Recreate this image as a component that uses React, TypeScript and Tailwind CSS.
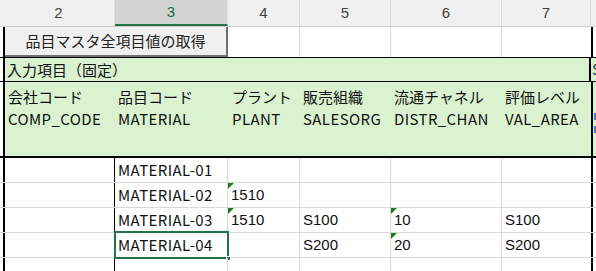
const jp = "font-['Noto_Sans_CJK_JP','Noto_Sans',sans-serif]"
const num = "font-['Liberation_Sans',Arial,sans-serif]"
const grid = 'border-[#d9d9d9]'

function Tri() {
  return (
    <svg className="absolute left-0 top-0" width="6" height="6" viewBox="0 0 6 6">
      <polygon points="0,0 6,0 0,6" fill="#1e7b22" />
    </svg>
  )
}

type Cells = [string, string, string, string, string, string]

const data: { cells: Cells; tri4?: boolean; tri6?: boolean; sel?: boolean }[] = [
  { cells: ['', 'MATERIAL-01', '', '', '', ''] },
  { cells: ['', 'MATERIAL-02', '1510', '', '', ''], tri4: true },
  { cells: ['', 'MATERIAL-03', '1510', 'S100', '10', 'S100'], tri4: true, tri6: true },
  { cells: ['', 'MATERIAL-04', '', 'S200', '20', 'S200'], tri6: true, sel: true },
  { cells: ['', '', '', '', '', ''] },
]

function Header() {
  const cols: [string, string][] = [
    ['2', 'w-[112px] ml-[3px]'],
    ['3', 'w-[113px]'],
    ['4', 'w-[72px]'],
    ['5', 'w-[91px]'],
    ['6', 'w-[111px]'],
    ['7', 'w-[89px]'],
  ]
  return (
    <div className={`flex h-[27px] bg-[#f0f0f0] border-b border-[#cfcfcf] ${num} text-[15px] text-[#444]`}>
      {cols.map(([n, w]) => (
        <div
          key={n}
          className={`${w} flex items-center justify-center border-r border-[#dcdcdc] ${
            n === '3' ? 'bg-[#d3d3d3] text-[#1d6b42] border-b-2 border-b-[#217346]' : ''
          }`}
        >
          {n}
        </div>
      ))}
      <div className="flex-1" />
    </div>
  )
}

export default function App() {
  return (
    <div className="w-[596px] h-[271px] overflow-hidden bg-white text-[#111]">
      <Header />

      {/* row with button */}
      <div className="flex h-[30px]">
        <div className="w-[3px]" />
        <div className="w-[225px] border-l-2 border-black flex">
          <div className={`flex-1 flex items-center justify-center bg-[#f0f0f0] border-r-2 border-b-2 border-[#707070] ${jp} text-[15px] text-[#222]`}>
            品目マスタ全項目値の取得
          </div>
        </div>
        <div className={`w-[72px] border-r ${grid}`} />
        <div className={`w-[91px] border-r ${grid}`} />
        <div className={`w-[111px] border-r ${grid}`} />
        <div className="w-[91px] border-r-2 border-black" />
        <div className="flex-1" />
      </div>

      {/* row 入力項目 */}
      <div className={`flex h-[25px] border-t border-b border-black bg-[#daf2d0] ${jp} text-[15px]`}>
        <div className="w-[3px] bg-white" />
        <div className="w-[588px] border-l-2 border-r-2 border-black flex items-center pl-[2px] leading-none">
          入力項目（固定）
        </div>
        <div className="flex-1 flex items-center overflow-hidden text-[#1f3a5f] pl-[1px]">S</div>
      </div>

      {/* row 項目名 */}
      <div className={`flex h-[76px] border-b-2 border-black bg-[#daf2d0] ${jp} text-[15px] leading-[22px]`}>
        <div className="w-[3px] bg-white" />
        {[
          ['w-[112px] border-l-2 border-black pl-[3px]', '会社コード', 'COMP_CODE'],
          ['w-[113px] pl-[3px]', '品目コード', 'MATERIAL'],
          ['w-[72px] pl-[4px]', 'プラント', 'PLANT'],
          ['w-[91px] pl-[3px]', '販売組織', 'SALESORG'],
          ['w-[111px] pl-[3px]', '流通チャネル', 'DISTR_CHAN'],
          ['w-[91px] border-r-2 border-black pl-[3px]', '評価レベル', 'VAL_AREA'],
        ].map(([w, a, b]) => (
          <div key={a} className={`${w} pt-[4px] whitespace-nowrap overflow-hidden`}>
            <div>{a}</div>
            <div className="tracking-[0.4px]">{b}</div>
          </div>
        ))}
        <div className="flex-1 flex flex-col gap-[6px] pt-[31px] pl-[1px]">
          <div className="w-[2px] h-[7px] bg-[#4a78c8]" />
          <div className="w-[2px] h-[7px] bg-[#4a78c8]" />
        </div>
      </div>

      {/* data rows */}
      {data.map((r, i) => (
        <div key={i} className={`flex h-[25px] border-b ${grid} text-[15px]`}>
          <div className="w-[3px]" />
          <div className={`w-[112px] border-l-2 border-black border-r ${grid}`} />
          <div className={`relative w-[113px] border-r ${grid} flex items-center pl-[3px] ${jp} tracking-[0.4px]`}>
            {r.cells[1]}
            {r.sel && (
              <>
                <div className="absolute left-[-1px] right-[-2px] top-[-2px] bottom-[-2px] border-2 border-[#217346]" />
                <div className="absolute right-[-4px] bottom-[-4px] w-[5px] h-[5px] bg-[#217346] border border-white" />
              </>
            )}
          </div>
          <div className={`relative w-[72px] border-r ${grid} flex items-center pl-[3px] ${num}`}>
            {r.tri4 && <Tri />}
            {r.cells[2]}
          </div>
          <div className={`w-[91px] border-r ${grid} flex items-center pl-[3px] ${num}`}>{r.cells[3]}</div>
          <div className={`relative w-[111px] border-r ${grid} flex items-center pl-[3px] ${num}`}>
            {r.tri6 && <Tri />}
            {r.cells[4]}
          </div>
          <div className={`w-[91px] border-r-2 border-black flex items-center pl-[3px] ${num}`}>{r.cells[5]}</div>
          <div className="flex-1" />
        </div>
      ))}
    </div>
  )
}
